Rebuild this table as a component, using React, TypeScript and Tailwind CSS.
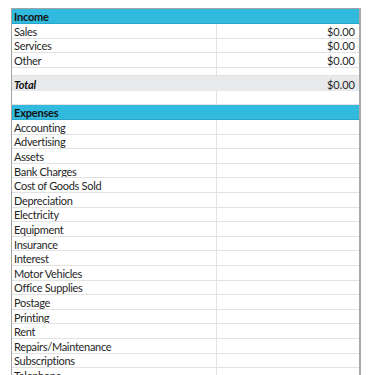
import React from "react";

const expenses = [
  "Accounting",
  "Advertising",
  "Assets",
  "Bank Charges",
  "Cost of Goods Sold",
  "Depreciation",
  "Electricity",
  "Equipment",
  "Insurance",
  "Interest",
  "Motor Vehicles",
  "Office Supplies",
  "Postage",
  "Printing",
  "Rent",
  "Repairs/Maintenance",
  "Subscriptions",
  "Telephone",
];

function Row({ label, value, h = "h-[14.6px]" }: { label?: string; value?: string; h?: string }) {
  return (
    <div className={`flex ${h} border-b border-[#e2e2e2] text-[11px] leading-none`}>
      <div className="w-[205px] shrink-0 border-r border-[#e2e2e2] pl-[2px] pt-[1px] flex items-center overflow-hidden whitespace-nowrap tracking-[-0.3px]">
        {label}
      </div>
      <div className="flex-1 flex items-center justify-end pr-[4px] pt-[1px]">{value}</div>
    </div>
  );
}

function Header({ label }: { label: string }) {
  return (
    <div className="h-[15px] bg-[#31b9de] border-b border-[#2aa6c8] flex items-center pl-[2px] pt-[1px] text-[11px] font-bold leading-none text-[#111] tracking-[-0.2px]">
      {label}
    </div>
  );
}

export default function App() {
  return (
    <div
      className="w-[375px] h-[375px] overflow-hidden bg-white pt-[8px] text-[#1f1f1f]"
      style={{ fontFamily: "Lato, 'Open Sans', sans-serif" }}
    >
      <div className="ml-[11px] w-[350px] border-l border-t border-r-2 border-[#a3a3a3] border-r-[#a8a8a8]">
        <Header label="Income" />
        <Row label="Sales" value="$0.00" h="h-[14.5px]" />
        <Row label="Services" value="$0.00" h="h-[14.5px]" />
        <Row label="Other" value="$0.00" h="h-[14.5px]" />
        <Row h="h-[8.5px]" />
        <div className="flex h-[15px] bg-[#e8e9eb] text-[11px] leading-none">
          <div className="w-[205px] pl-[2px] pt-[1px] flex items-center font-bold italic text-[#111] tracking-[-0.2px]">Total</div>
          <div className="flex-1 flex items-center justify-end pr-[4px] pt-[1px]">$0.00</div>
        </div>
        <Row h="h-[14px]" />
        <Header label="Expenses" />
        {expenses.map((e) => (
          <Row key={e} label={e} />
        ))}
      </div>
    </div>
  );
}
